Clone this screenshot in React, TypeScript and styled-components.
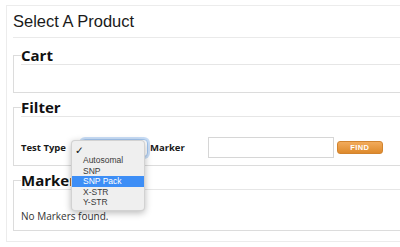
import styled, { createGlobalStyle } from "styled-components";

const GlobalStyle = createGlobalStyle`
  html, body {
    margin: 0;
    background: #fff;
    overflow: hidden;
  }
  body {
    font-family: "Open Sans", "Liberation Sans", sans-serif;
    color: #333;
  }
`;

const Page = styled.div`
  padding: 5px 0 0 6px;
`;

const Panel = styled.div`
  width: 480px;
  border: 1px solid #ececec;
  padding: 0 6px 10px;
  background: #fff;
`;

const Title = styled.h1`
  margin: 5px 0 0;
  padding: 0 0 6px;
  font: 400 16.5px/20px "Liberation Sans", Arial, sans-serif;
  color: #1a1a1a;
  border-bottom: 1px solid #eaeaea;
`;

const Group = styled.fieldset`
  margin: 8px 0 0;
  padding: 0 7px 7px;
  border: 1px solid #dcdcdc;
  min-width: 0;

  & + & {
    margin-top: 5px;
  }
`;

const Legend = styled.legend`
  display: block;
  width: 100%;
  padding: 0;
  margin: 0 0 20px;
  font: 700 15px/18px "Open Sans", sans-serif;
  color: #111;
  border-bottom: 1px solid #e6e6e6;
`;

const FilterRow = styled.div`
  display: flex;
  align-items: center;
  height: 21px;
`;

const FieldLabel = styled.label<{ $gap: number }>`
  font: 700 9.5px/21px "Open Sans", sans-serif;
  color: #1a1a1a;
  margin-right: ${(p) => p.$gap}px;
`;

const SelectBox = styled.div`
  position: relative;
  width: 62px;
  height: 16px;
  margin-right: 2px;
  border: 1px solid #a3c6ef;
  border-radius: 4px;
  background: #fff;
  box-shadow: 0 0 0 2px rgba(120, 172, 236, 0.4);
  display: flex;
  align-items: center;
  justify-content: flex-end;
  padding-right: 3px;
  box-sizing: content-box;
`;

const TextInput = styled.input`
  width: 126px;
  height: 21px;
  box-sizing: border-box;
  border: 1px solid #d6d6d6;
  margin: 0 3px 0 0;
  padding: 0 4px;
  background: #fff;
`;

const FindButton = styled.button`
  width: 46px;
  height: 13px;
  padding: 0;
  border: 1px solid #d2842f;
  border-radius: 3px;
  background: linear-gradient(#f2ab5c, #de8a2c);
  color: #fff;
  font: 700 7.5px/11px "Liberation Sans", Arial, sans-serif;
  letter-spacing: 0.4px;
`;

const Menu = styled.ul`
  position: absolute;
  left: -11px;
  top: 0;
  width: 72px;
  margin: 0;
  padding: 4px 0 2px;
  list-style: none;
  background: #efefef;
  border: 1px solid rgba(0, 0, 0, 0.12);
  border-radius: 4px;
  box-shadow: 0 2px 7px rgba(0, 0, 0, 0.28);
  z-index: 5;
`;

const MenuItem = styled.li<{ $active?: boolean }>`
  position: relative;
  height: 10.6px;
  padding-left: 11px;
  font: 400 8.5px/10.6px "Liberation Sans", Arial, sans-serif;
  color: ${(p) => (p.$active ? "#fff" : "#3a3a3a")};
  background: ${(p) => (p.$active ? "#3d8ef6" : "transparent")};
`;

const Check = styled.span`
  position: absolute;
  left: 3px;
  top: 0;
  font: 400 10.5px/11px "DejaVu Sans", sans-serif;
  color: #111;
`;

const Note = styled.p`
  margin: 0;
  font: 400 10px/13px "Open Sans", sans-serif;
  color: #333;
`;

const options = ["Autosomal", "SNP", "SNP Pack", "X-STR", "Y-STR"];

export default function App() {
  return (
    <Page>
      <GlobalStyle />
      <Panel>
        <Title>Select A Product</Title>
        <Group>
          <Legend>Cart</Legend>
        </Group>
        <Group>
          <Legend>Filter</Legend>
          <FilterRow>
            <FieldLabel $gap={15}>Test Type</FieldLabel>
            <SelectBox>
              <svg width="6" height="10" viewBox="0 0 6 10">
                <path d="M1 4 L3 2 L5 4 M1 6 L3 8 L5 6" fill="none" stroke="#333" strokeWidth="1.1" />
              </svg>
              <Menu>
                <MenuItem>
                  <Check>✓</Check>
                </MenuItem>
                {options.map((o) => (
                  <MenuItem key={o} $active={o === "SNP Pack"}>
                    {o}
                  </MenuItem>
                ))}
              </Menu>
            </SelectBox>
            <FieldLabel $gap={23}>Marker</FieldLabel>
            <TextInput />
            <FindButton>FIND</FindButton>
          </FilterRow>
        </Group>
        <Group>
          <Legend>Markers</Legend>
          <Note>No Markers found.</Note>
        </Group>
      </Panel>
    </Page>
  );
}
